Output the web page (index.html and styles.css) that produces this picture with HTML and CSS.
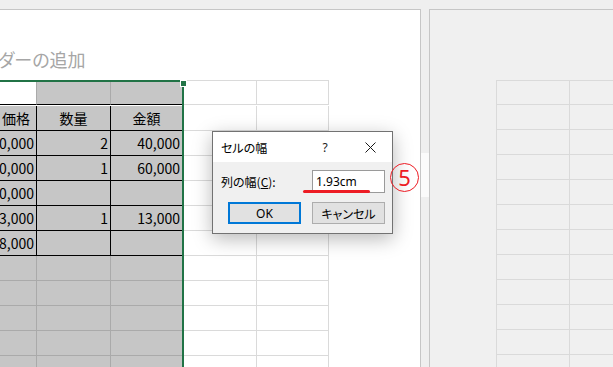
FILE: index.html
```html
<!DOCTYPE html>
<html lang="ja">
<head>
<meta charset="utf-8">
<title>セルの幅</title>
<link rel="stylesheet" href="styles.css">
</head>
<body>
<div class="desk">
  <div class="page page-left">
    <div class="title">ダーの追加</div>
    <div class="sheet">
      <div class="c r0 a act"></div>
      <div class="c r0 sel tbb"></div>
      <div class="c r0 sel tbb"></div>
      <div class="c r0"></div>
      <div class="c r0"></div>

      <div class="c sel tb num pa">価格</div>
      <div class="c sel tb ctr">数量</div>
      <div class="c sel tb ctr">金額</div>
      <div class="c"></div>
      <div class="c"></div>

      <div class="c sel tb num">0,000</div>
      <div class="c sel tb num">2</div>
      <div class="c sel tb num">40,000</div>
      <div class="c"></div>
      <div class="c"></div>

      <div class="c sel tb num">0,000</div>
      <div class="c sel tb num">1</div>
      <div class="c sel tb num">60,000</div>
      <div class="c"></div>
      <div class="c"></div>

      <div class="c sel tb num">0,000</div>
      <div class="c sel tb num"></div>
      <div class="c sel tb num"></div>
      <div class="c"></div>
      <div class="c"></div>

      <div class="c sel tb num">3,000</div>
      <div class="c sel tb num">1</div>
      <div class="c sel tb num">13,000</div>
      <div class="c"></div>
      <div class="c"></div>

      <div class="c sel tb num">8,000</div>
      <div class="c sel tb num"></div>
      <div class="c sel tb num"></div>
      <div class="c"></div>
      <div class="c"></div>

      <div class="c sel"></div><div class="c sel"></div><div class="c sel"></div><div class="c"></div><div class="c"></div>
      <div class="c sel"></div><div class="c sel"></div><div class="c sel"></div><div class="c"></div><div class="c"></div>
      <div class="c sel"></div><div class="c sel"></div><div class="c sel"></div><div class="c"></div><div class="c"></div>
      <div class="c sel"></div><div class="c sel"></div><div class="c sel"></div><div class="c"></div><div class="c"></div>
      <div class="c sel"></div><div class="c sel"></div><div class="c sel"></div><div class="c"></div><div class="c"></div>
    </div>

    <div class="sel-border"></div>
    <div class="handle"></div>

    <div class="dialog">
      <div class="dlg-title">
        <span class="dlg-name">セルの幅</span>
        <span class="dlg-q">?</span>
        <span class="dlg-x">
          <svg width="11" height="11" viewBox="0 0 11 11"><path d="M0.5 0.5 L10.5 10.5 M10.5 0.5 L0.5 10.5" stroke="#1a1a1a" stroke-width="1" fill="none"/></svg>
        </span>
      </div>
      <div class="dlg-body">
        <div class="dlg-row">
          <span class="dlg-label">列の幅(<u>C</u>):</span>
          <span class="dlg-input">1.93cm</span>
        </div>
        <div class="dlg-btns">
          <span class="btn btn-ok">OK</span>
          <span class="btn btn-cancel">キャンセル</span>
        </div>
      </div>
    </div>

    <div class="mark-line"></div>
    <div class="mark-num">5</div>
  </div>

  <div class="gutter"><div class="gutter-mark"></div></div>

  <div class="page page-right">
    <div class="rgrid">
      <div class="g r0 g1"></div><div class="g r0"></div><div class="g r0"></div>
      <div class="g g1"></div><div class="g"></div><div class="g"></div>
      <div class="g g1"></div><div class="g"></div><div class="g"></div>
      <div class="g g1"></div><div class="g"></div><div class="g"></div>
      <div class="g g1"></div><div class="g"></div><div class="g"></div>
      <div class="g g1"></div><div class="g"></div><div class="g"></div>
      <div class="g g1"></div><div class="g"></div><div class="g"></div>
      <div class="g g1"></div><div class="g"></div><div class="g"></div>
      <div class="g g1"></div><div class="g"></div><div class="g"></div>
      <div class="g g1"></div><div class="g"></div><div class="g"></div>
      <div class="g g1"></div><div class="g"></div><div class="g"></div>
      <div class="g g1"></div><div class="g"></div><div class="g"></div>
    </div>
  </div>
</div>
</body>
</html>
```

FILE: styles.css
```css
html, body {
  margin: 0;
  padding: 0;
}
body {
  width: 613px;
  height: 367px;
  overflow: hidden;
  background: #efefef;
  font-family: "Noto Sans CJK JP", "Noto Sans", sans-serif;
  color: #000;
}
.desk {
  display: flex;
  height: 367px;
  padding-top: 9px;
  box-sizing: border-box;
}
.page {
  border-top: 1px solid #c6c6c6;
  overflow: hidden;
}
.page-left {
  flex: 0 0 421px;
  box-sizing: border-box;
  border-right: 1px solid #c6c6c6;
  background: #fff;
  position: relative;
}
.gutter {
  flex: 0 0 8px;
}
.gutter-mark {
  margin-top: 144px;
  height: 44px;
  background: #fbfbfb;
}
.page-right {
  flex: 1;
  border-left: 1px solid #c6c6c6;
  background: #f0f0f0;
}

/* title */
.title {
  height: 71px;
  box-sizing: border-box;
  padding: 38px 0 0 0;
  margin-left: -2px;
  font-size: 18px;
  line-height: 22px;
  color: #a6a6a6;
  white-space: nowrap;
  font-feature-settings: "palt";
}

/* sheet grid */
.sheet {
  display: grid;
  grid-template-columns: 37px 74px 72px 74px 72px;
  grid-auto-rows: 25px;
  width: 329px;
}
.c {
  box-sizing: border-box;
  border-right: 1px solid #dadada;
  border-bottom: 1px solid #dadada;
  font-size: 14px;
  display: flex;
  align-items: center;
  justify-content: flex-end;
  padding-right: 2px;
  white-space: nowrap;
  overflow: hidden;
}
.c.r0 {
  border-top: 1px solid #dadada;
  height: 26px;
  margin-top: -1px;
}
.sheet > .c:nth-child(-n+5) {
  height: 25px;
}
.sel {
  background: #c6c6c6;
  border-right-color: #aaaaaa;
  border-bottom-color: #aaaaaa;
}
.act {
  background: #fff;
  border-right-color: #aaaaaa;
  border-bottom-color: #000;
}
.tbb {
  border-bottom-color: #000;
}
.tb {
  border-right-color: #000;
  border-bottom-color: #000;
}
.num {
  justify-content: flex-end;
}
.ctr {
  justify-content: center;
  padding-right: 0;
}
.pa {
  padding-right: 6px;
}

/* selection outline */
.sel-border {
  position: absolute;
  left: -3px;
  top: 70px;
  width: 187px;
  bottom: -4px;
  box-sizing: border-box;
  border: 2px solid #217346;
}
.handle {
  position: absolute;
  left: 180px;
  top: 70px;
  width: 5px;
  height: 5px;
  background: #217346;
  border: 1px solid #fff;
}

/* dialog */
.dialog {
  position: absolute;
  left: 212px;
  top: 121px;
  width: 181px;
  height: 103px;
  box-sizing: border-box;
  border: 1px solid #727272;
  background: #f0f0f0;
  display: flex;
  flex-direction: column;
  box-shadow: 0 5px 18px rgba(0, 0, 0, 0.28);
  font-feature-settings: "palt";
}
.dlg-title {
  height: 30px;
  flex: none;
  background: #fff;
  display: flex;
  align-items: center;
  font-size: 12px;
}
.dlg-name {
  padding-left: 8px;
  width: 84px;
}
.dlg-q {
  width: 40px;
  text-align: center;
  font-family: "Noto Sans", sans-serif;
  font-size: 12px;
  color: #1a1a1a;
}
.dlg-x {
  margin-left: auto;
  width: 44px;
  display: flex;
  justify-content: center;
  align-items: center;
}
.dlg-x svg {
  display: block;
}
.dlg-body {
  flex: 1;
  padding: 8px 0 0 8px;
}
.dlg-row {
  display: flex;
  align-items: center;
  height: 23px;
}
.dlg-label {
  flex: none;
  width: 91px;
  font-size: 12px;
}
.dlg-label u {
  text-underline-offset: 1px;
}
.dlg-input {
  flex: none;
  width: 73px;
  height: 23px;
  box-sizing: border-box;
  border: 1px solid #9a9a9a;
  background: #fff;
  font-family: "Noto Sans", sans-serif;
  font-size: 12px;
  line-height: 21px;
  padding-left: 3px;
}
.dlg-btns {
  display: flex;
  gap: 11px;
  margin: 9px 0 0 7px;
}
.btn {
  flex: none;
  width: 73px;
  height: 22px;
  box-sizing: border-box;
  background: #e1e1e1;
  display: flex;
  align-items: center;
  justify-content: center;
  font-size: 12px;
}
.btn-ok {
  border: 2px solid #0078d7;
  font-family: "Noto Sans", sans-serif;
}
.btn-cancel {
  border: 1px solid #adadad;
}

/* annotations */
.mark-line {
  position: absolute;
  left: 303px;
  top: 180px;
  width: 67px;
  height: 3px;
  border-radius: 2px;
  background: #ed1c24;
}
.mark-num {
  position: absolute;
  left: 390px;
  top: 153px;
  width: 29px;
  height: 29px;
  box-sizing: border-box;
  border: 1.5px solid #ed1c24;
  border-radius: 50%;
  color: #ed1c24;
  font-family: "Noto Sans", sans-serif;
  font-size: 22px;
  line-height: 26px;
  text-align: center;
}

/* right page grid */
.rgrid {
  display: grid;
  grid-template-columns: 74px 73px 73px;
  grid-auto-rows: 25px;
  margin: 70px 0 0 66px;
  width: 220px;
}
.g {
  box-sizing: border-box;
  border-right: 1px solid #dadada;
  border-bottom: 1px solid #dadada;
}
.g1 {
  border-left: 1px solid #dadada;
}
.g.r0 {
  border-top: 1px solid #dadada;
}
```
